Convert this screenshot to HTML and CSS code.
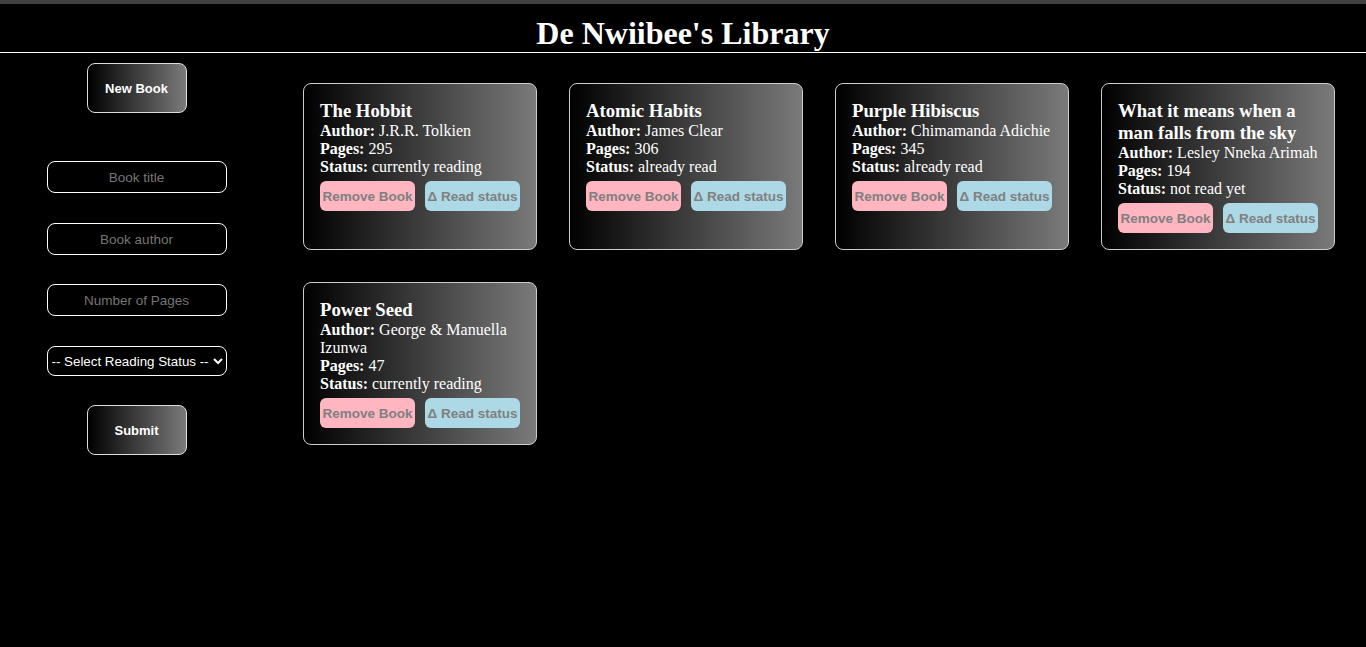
FILE: index.html
```html
<!DOCTYPE html>
<html>
<head>
<meta charset="utf-8">
<link rel="stylesheet" href="styles.css">
</head>
<body>
<header class="top">
  <h1 class="title">De Nwiibee's Library</h1>
</header>
<div class="layout">
  <aside class="sidebar">
    <button class="grad-btn new-btn">New Book</button>
    <form class="book-form">
      <input class="field" type="text" placeholder="Book title">
      <input class="field field-tight" type="text" placeholder="Book author">
      <input class="field" type="text" placeholder="Number of Pages">
      <select class="field select">
        <option>-- Select Reading Status --</option>
      </select>
      <button type="button" class="grad-btn submit-btn">Submit</button>
    </form>
  </aside>
  <main class="cards">
    <div class="card">
      <h3 class="card-title">The Hobbit</h3>
      <div><b>Author:</b> J.R.R. Tolkien</div>
      <div><b>Pages:</b> 295</div>
      <div><b>Status:</b> currently reading</div>
      <div class="actions"><button class="remove">Remove Book</button><button class="toggle">Δ Read status</button></div>
    </div>
    <div class="card">
      <h3 class="card-title">Atomic Habits</h3>
      <div><b>Author:</b> James Clear</div>
      <div><b>Pages:</b> 306</div>
      <div><b>Status:</b> already read</div>
      <div class="actions"><button class="remove">Remove Book</button><button class="toggle">Δ Read status</button></div>
    </div>
    <div class="card">
      <h3 class="card-title">Purple Hibiscus</h3>
      <div><b>Author:</b> Chimamanda Adichie</div>
      <div><b>Pages:</b> 345</div>
      <div><b>Status:</b> already read</div>
      <div class="actions"><button class="remove">Remove Book</button><button class="toggle">Δ Read status</button></div>
    </div>
    <div class="card">
      <h3 class="card-title">What it means when a man falls from the sky</h3>
      <div><b>Author:</b> Lesley Nneka Arimah</div>
      <div><b>Pages:</b> 194</div>
      <div><b>Status:</b> not read yet</div>
      <div class="actions"><button class="remove">Remove Book</button><button class="toggle">Δ Read status</button></div>
    </div>
    <div class="card">
      <h3 class="card-title">Power Seed</h3>
      <div><b>Author:</b> George &amp; Manuella Izunwa</div>
      <div><b>Pages:</b> 47</div>
      <div><b>Status:</b> currently reading</div>
      <div class="actions"><button class="remove">Remove Book</button><button class="toggle">Δ Read status</button></div>
    </div>
  </main>
</div>
</body>
</html>
```

FILE: styles.css
```css
html, body {
  margin: 0;
  padding: 0;
  background: #000;
  color: #fff;
  font-family: "Liberation Serif", "Times New Roman", serif;
  font-size: 16px;
  min-height: 647px;
}

.top {
  border-top: 4px solid #404040;
  border-bottom: 1px solid #fff;
  text-align: center;
}

.title {
  margin: 11px 0 0;
  font-size: 32px;
  line-height: 37px;
  font-weight: bold;
}

.layout {
  display: grid;
  grid-template-columns: 273px 1fr;
}

.sidebar {
  display: flex;
  flex-direction: column;
  align-items: center;
  padding-top: 10px;
}

.grad-btn {
  width: 100px;
  height: 50px;
  border: 1px solid #ddd;
  border-radius: 8px;
  background: linear-gradient(to right, #000, #7a7a7a);
  color: #fff;
  font-family: "Liberation Sans", Arial, sans-serif;
  font-weight: bold;
  font-size: 13px;
  padding: 0;
}

.book-form {
  display: flex;
  flex-direction: column;
  align-items: center;
  margin-top: 48px;
}

.field {
  box-sizing: border-box;
  width: 180px;
  height: 32px;
  border: 1px solid #fff;
  border-radius: 8px;
  background: #000;
  color: #fff;
  text-align: center;
  font-family: "Liberation Sans", Arial, sans-serif;
  font-size: 13.5px;
  margin-bottom: 30px;
  padding: 0 4px;
}

.field-tight {
  margin-bottom: 29px;
}

.field::placeholder {
  color: #757575;
}

.select {
  height: 30px;
  text-align: left;
  padding: 0;
  margin-bottom: 29px;
  font-size: 13.33px;
}

.cards {
  display: grid;
  grid-template-columns: repeat(4, 234px);
  gap: 32px 32px;
  padding: 30px 0 0 30px;
  align-content: start;
}

.card {
  box-sizing: border-box;
  border: 1px solid #ccc;
  border-radius: 8px;
  background: linear-gradient(to right, #000, #7a7a7a);
  padding: 16px;
  line-height: 18px;
}

.card-title {
  margin: 0;
  font-size: 18.72px;
  line-height: 22px;
}

.actions {
  display: flex;
  gap: 10px;
  margin-top: 5px;
}

.actions button {
  width: 95px;
  height: 30px;
  border: none;
  border-radius: 6px;
  color: #808080;
  font-family: "Liberation Sans", Arial, sans-serif;
  font-weight: bold;
  font-size: 13.5px;
  padding: 0;
}

.remove {
  background: #ffb6c1;
}

.toggle {
  background: #add8e6;
}
```
